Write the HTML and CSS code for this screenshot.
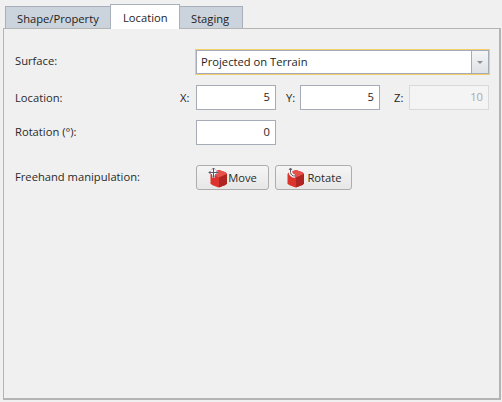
FILE: index.html
```html
<!DOCTYPE html>
<html lang="en">
<head>
<meta charset="utf-8">
<title>Location</title>
<link rel="stylesheet" href="styles.css">
</head>
<body>
<div class="tabs">
  <div class="tab">Shape/Property</div>
  <div class="tab active">Location</div>
  <div class="tab">Staging</div>
</div>
<main class="panel">
  <div class="row row-surface">
    <span class="label">Surface:</span>
    <div class="combo">
      <span class="combo-text">Projected on Terrain</span>
      <span class="combo-arrow"><svg width="6" height="3" viewBox="0 0 6 3"><path d="M0 0h6L3 3z" fill="#8b9098"/></svg></span>
    </div>
  </div>
  <div class="row row-location">
    <span class="label">Location:</span>
    <div class="coords">
      <span class="axis axis-x">X:</span><div class="field">5</div>
      <span class="axis axis-y">Y:</span><div class="field">5</div>
      <span class="axis axis-z">Z:</span><div class="field disabled">10</div>
    </div>
  </div>
  <div class="row row-rotation">
    <span class="label">Rotation (°):</span>
    <div class="field">0</div>
  </div>
  <div class="row row-free">
    <span class="label">Freehand manipulation:</span>
    <div class="buttons">
      <button class="btn btn-move"><svg class="cube" width="22" height="22" viewBox="0 0 22 22"><path d="M11 3l6.500 2.300 1.500 1.700v9.500l-1.500 1.500-7 2.500-6.500-2.500-1.500-1.500V7l1.500-1.700z" fill="#dc342c"/><path d="M11 3l6.500 2.300 1.500 1.700-8 3.500-8-3.500 1.500-1.700z" fill="#e4524a"/><path d="M11 10.500l8-3.500v9.500l-1.500 1.500-6.500 2.500z" fill="#b02521"/><path d="M5.500 1v9.500M1 5.500h9" stroke="#f7f7f7" stroke-width="3"/><path d="M5.500 1v9.500M1 5.500h9M4 2.500l1.500-1.500 1.500 1.500M4 8.500l1.500 1.500 1.500-1.500M2.500 4L1 5.500 2.500 7M8.500 4L10 5.500 8.500 7" fill="none" stroke="#5a5a62" stroke-width="1"/></svg>Move</button>
      <button class="btn btn-rotate"><svg class="cube" width="22" height="22" viewBox="0 0 22 22"><path d="M11 3l6.500 2.300 1.500 1.700v9.500l-1.500 1.500-7 2.500-6.500-2.500-1.500-1.500V7l1.500-1.700z" fill="#dc342c"/><path d="M11 3l6.500 2.300 1.500 1.700-8 3.500-8-3.500 1.500-1.700z" fill="#e4524a"/><path d="M11 10.500l8-3.500v9.500l-1.500 1.500-6.500 2.500z" fill="#b02521"/><path d="M5.500 2v3.500a4 4 0 0 0 4.500 3.500" fill="none" stroke="#f7f7f7" stroke-width="3.500"/><path d="M4 3l1.500-2L7 3M5.500 1.500v4a4 4 0 0 0 4.500 3.500" fill="none" stroke="#5a5a62" stroke-width="1"/></svg>Rotate</button>
    </div>
  </div>
</main>
</body>
</html>
```

FILE: styles.css
```css
* { box-sizing: border-box; }
html, body { margin: 0; height: 402px; overflow: hidden; }
body {
  background: #f0f0f0;
  font-family: "Open Sans", "Noto Sans", sans-serif;
  font-size: 11.2px;
  color: #1e1e1e;
  padding: 4px 1px 2px 3px;
  display: flex;
  flex-direction: column;
}
.tabs {
  display: flex;
  align-items: flex-end;
  height: 25px;
  padding-left: 2px;
  position: relative;
  z-index: 1;
  margin-bottom: -1px;
}
.tab {
  height: 22px;
  margin-bottom: 1px;
  padding: 4px 0 0 11px;
  background: #cbd3dc;
  border: 1px solid #a9b0bc;
  border-bottom: none;
  margin-right: -1px;
}
.tab:nth-child(1) { width: 106px; }
.tab:nth-child(3) { width: 64px; }
.tab.active {
  width: 70px;
  height: 25px;
  margin-bottom: 0;
  padding: 5px 0 0 12px;
  background: #fff;
}
.panel {
  flex: 1;
  border: 1px solid #b4b4b4;
  border-width: 1px 2px 2px 1px;
  padding: 20px 10px 0 11px;
}
.row { display: flex; align-items: center; height: 25px; }
.label { width: 181px; flex: none; color: #2a2a2a; padding-bottom: 2px; }
.row-surface { height: 26px; }
.row-surface .label { width: 180px; padding-bottom: 4px; }
.row-location .label { padding-bottom: 0; }
.row-location { margin-top: 10px; }
.row-rotation { margin-top: 10px; }
.row-free { margin-top: 20px; }
.combo {
  width: 295px;
  height: 26px;
  flex: none;
  display: flex;
  background: #fff;
  border: 1px solid #f3cf6c;
  box-shadow: inset 0 0 0 1px #a5acb8;
}
.combo-text { flex: 1; padding: 4px 0 0 5px; }
.combo-arrow {
  width: 17px;
  margin: 1px;
  border-left: 1px solid #a5acb8;
  background: linear-gradient(#f4f5f6, #dfe2e6);
  display: flex;
  align-items: center;
  justify-content: center;
}
.coords { display: flex; align-items: center; margin-left: -17px; }
.axis { flex: none; }
.axis-x { width: 17px; padding-left: 1px; }
.axis-y { width: 24px; padding-left: 10px; }
.axis-z { width: 29px; padding-left: 14px; }
.field {
  width: 80px;
  height: 25px;
  flex: none;
  background: #fff;
  border: 1px solid #a5acb8;
  text-align: right;
  padding: 3px 5px 0 0;
}
.field.disabled {
  background: #f4f4f4;
  border-color: #d9d9d9;
  color: #a8a8a8;
}
.buttons { display: flex; gap: 6px; }
.btn {
  height: 25px;
  padding: 0;
  display: flex;
  align-items: center;
  justify-content: center;
  font: inherit;
  color: #2a2a2a;
  background: linear-gradient(#f5f5f5, #e7e7e7);
  border: 1px solid #adadad;
  border-radius: 3px;
}
.btn-move { width: 73px; }
.btn-rotate { width: 77px; }
.cube { flex: none; }
.btn-move .cube { margin-right: -2px; }
```
